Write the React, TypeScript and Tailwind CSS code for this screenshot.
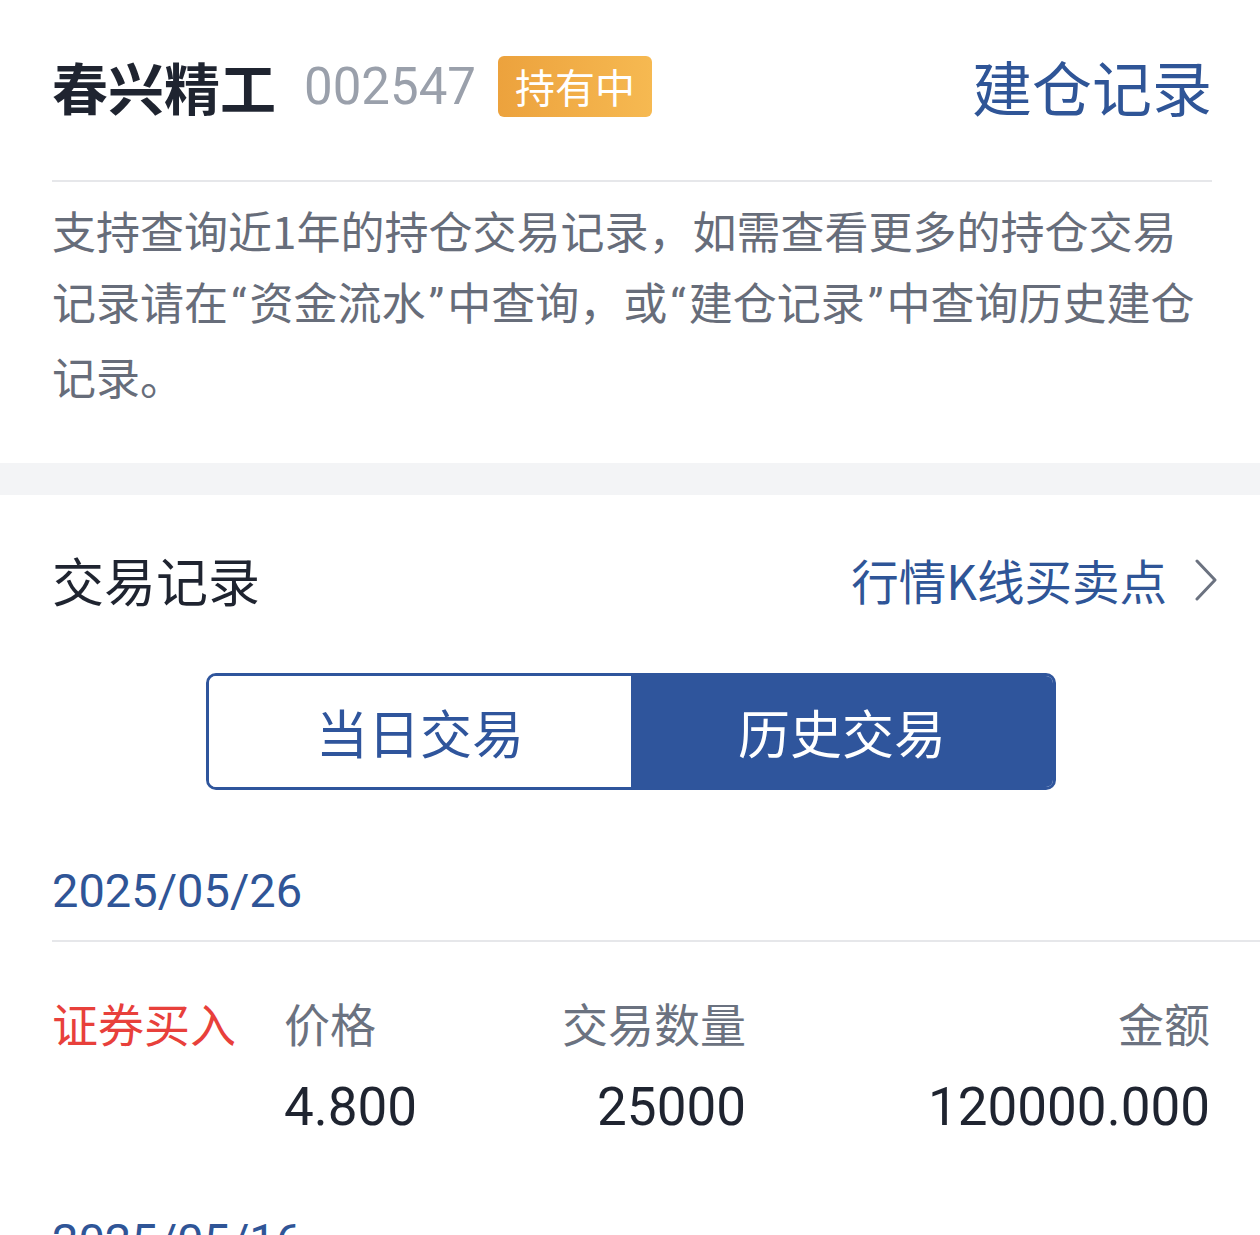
import React from "react";

const cjk = "font-['Noto_Sans_CJK_SC',sans-serif]";
const num = "font-['Roboto','Noto_Sans_CJK_SC',sans-serif]";

const records = [
  { date: "2025/05/26", type: "证券买入", price: "4.800", qty: "25000", amount: "120000.000" },
  { date: "2025/05/16", type: "证券买入", price: "4.800", qty: "25000", amount: "120000.000" },
];

// narrow western-style quote marks, as in the screenshot
function Q({ c }: { c: string }) {
  return <span className="mx-[3px] font-['Roboto',sans-serif]">{c}</span>;
}

function Chevron() {
  return (
    <svg width="24" height="42" viewBox="0 0 24 42" fill="none">
      <polyline points="3,2 21,21 3,40" stroke="#6b7280" strokeWidth="3" strokeLinecap="round" strokeLinejoin="round" />
    </svg>
  );
}

export default function App() {
  return (
    <div className={`w-full bg-white ${cjk}`}>
      {/* header */}
      <div className="pt-[50px] pl-[52px] pr-[48px]">
        <div className="flex h-[72px] items-center justify-between">
          <div className="flex items-center">
            <span className="text-[56px] font-bold leading-none text-[#1f2430]">春兴精工</span>
            <span className={`ml-[28px] text-[51px] leading-none text-[#9aa0ab] ${num}`}>002547</span>
            <span className="ml-[22px] flex h-[61px] w-[154px] items-center justify-center rounded-[6px] bg-linear-to-r from-[#eca23d] to-[#f6b951] text-[40px] leading-none text-white">
              持有中
            </span>
          </div>
          <span className="text-[60px] leading-none text-[#2f5597]">建仓记录</span>
        </div>
      </div>
      <div className="mr-[48px] ml-[52px] mt-[58px] h-[2px] bg-[#e6e7ea]" />

      <p className="mt-[13px] mb-[51px] whitespace-nowrap pl-[52px] pr-[48px] text-[44px] leading-[71px] text-[#676d7a]">
        支持查询近1年的持仓交易记录，如需查看更多的持仓交易
        <br />
        记录请在<Q c="“" />资金流水<Q c="”" />中查询，或<Q c="“" />建仓记录<Q c="”" />中查询历史建仓
        <br />
        记录。
      </p>

      <div className="h-[32px] bg-[#f3f4f6]" />

      {/* trade records */}
      <div className="mt-[55px] flex h-[60px] items-center justify-between pl-[52px] pr-[42px]">
        <span className="text-[52px] leading-none text-[#1f2430]">交易记录</span>
        <div className="flex items-center gap-[27px]">
          <span className="text-[47.5px] leading-none text-[#2f5597]">行情K线买卖点</span>
          <Chevron />
        </div>
      </div>

      <div className="mt-[63px] flex justify-center pl-[2px]">
        <div className="flex h-[117px] w-[850px] overflow-hidden rounded-[10px] border-[3px] border-[#2f559c]">
          <div className="flex flex-1 items-center justify-center bg-white text-[52px] leading-none text-[#2f559c]">
            当日交易
          </div>
          <div className="flex flex-1 items-center justify-center bg-[#2f559c] text-[52px] leading-none text-white">
            历史交易
          </div>
        </div>
      </div>

      {records.map((r, i) => (
        <div key={i}>
          <div className="pt-[73px] pb-[21px] pl-[52px]">
            <div className={`text-[47px] leading-[56px] text-[#2f5597] ${num}`}>{r.date}</div>
          </div>
          <div className="ml-[52px] h-[2px] bg-[#e6e7ea]" />
          <div className="pt-[50px] pb-[1px] pl-[52px] pr-[50px]">
            <div className="flex text-[46px] leading-[60px]">
              <div className="w-[232px] text-[#e8403b]">{r.type}</div>
              <div className="w-[230px] text-[#6b7280]">价格</div>
              <div className="w-[232px] text-right text-[#6b7280]">交易数量</div>
              <div className="flex-1 text-right text-[#6b7280]">金额</div>
            </div>
            <div className={`mt-[23px] flex text-[53px] leading-[64px] text-[#1f2430] ${num}`}>
              <div className="w-[232px]" />
              <div className="w-[230px]">{r.price}</div>
              <div className="w-[232px] text-right">{r.qty}</div>
              <div className="flex-1 text-right">{r.amount}</div>
            </div>
          </div>
        </div>
      ))}
    </div>
  );
}
